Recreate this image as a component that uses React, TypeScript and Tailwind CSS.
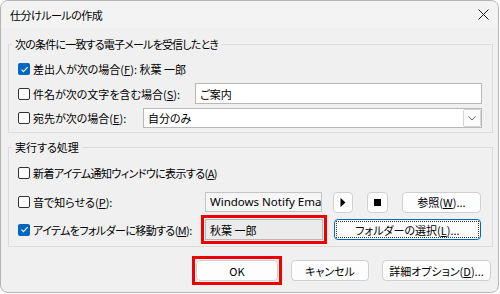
import React from "react";

const F = "font-['Noto_Sans_CJK_JP','Noto_Sans',sans-serif] [font-feature-settings:'palt']";

function Check({ checked }: { checked?: boolean }) {
  return checked ? (
    <span className="w-[12px] h-[12px] rounded-[2px] bg-[#0067c0] flex items-center justify-center shrink-0">
      <svg width="9" height="9" viewBox="0 0 9 9">
        <path d="M1.5 4.6 L3.5 6.6 L7.6 2.2" stroke="white" strokeWidth="1.1" fill="none" />
      </svg>
    </span>
  ) : (
    <span className="w-[12px] h-[12px] rounded-[2px] border border-[#333333] bg-white shrink-0" />
  );
}

function Btn({ children, className = "" }: { children: React.ReactNode; className?: string }) {
  return (
    <div
      className={`h-[21px] rounded-[4px] border border-[#d0d0d0] bg-[#fdfdfd] flex items-center justify-center text-black whitespace-nowrap ${className}`}
    >
      {children}
    </div>
  );
}

export default function App() {
  return (
    <div className={`w-[500px] h-[294px] bg-white text-black text-[11px] leading-[16px] ${F}`}>
      <div className="w-[499px] h-[293px] rounded-[8px] border border-[#b4b4b4] bg-[#f0f0f0] overflow-hidden flex flex-col">
        {/* title bar */}
        <div className="h-[27px] bg-[#f3f3f3] flex items-center justify-between pl-[9px] pr-[8px] shrink-0">
          <span className="tracking-[-0.5px]">仕分けルールの作成</span>
          <svg width="11" height="11" viewBox="0 0 11 11" className="mr-[1px]">
            <path d="M0.5 0.5 L10.5 10.5 M10.5 0.5 L0.5 10.5" stroke="#1a1a1a" strokeWidth="1" />
          </svg>
        </div>

        {/* group 1 */}
        <fieldset className="mt-[8px] ml-[7px] w-[485px] border border-[#dcdcdc] pl-[9px] pr-[9px] pb-[4px]">
          <legend className="-ml-[6px] px-[3px] leading-[16px] tracking-[-0.8px]">次の条件に一致する電子メールを受信したとき</legend>
          <div className="pt-[7px] h-[27px] flex items-center gap-[3px] whitespace-nowrap">
            <Check checked />
            <span>
              差出人が次の場合(<u>F</u>): 秋葉 一郎
            </span>
          </div>
          <div className="mt-[4px] h-[21px] flex items-center">
            <div className="w-[177px] shrink-0 flex items-center gap-[3px] whitespace-nowrap">
              <Check />
              <span>
                件名が次の文字を含む場合(<u>S</u>):
              </span>
            </div>
            <div className="w-[287px] h-[21px] border border-[#b8b8b8] bg-white flex items-center pl-[4px]">
              ご案内
            </div>
          </div>
          <div className="mt-[4px] h-[20px] flex items-center">
            <div className="w-[125px] shrink-0 flex items-center gap-[3px] whitespace-nowrap">
              <Check />
              <span>
                宛先が次の場合(<u>E</u>):
              </span>
            </div>
            <div className="w-[339px] h-[20px] border border-[#b8b8b8] bg-white flex items-center justify-between pl-[4px]">
              <span>自分のみ</span>
              <div className="w-[18px] h-[18px] border border-[#d4d4d4] rounded-[2px] bg-[#fbfbfb] flex items-center justify-center">
                <svg width="8" height="5" viewBox="0 0 8 5">
                  <path d="M0.5 0.5 L4 4 L7.5 0.5" stroke="#606060" strokeWidth="1" fill="none" />
                </svg>
              </div>
            </div>
          </div>
        </fieldset>

        {/* group 2 */}
        <fieldset className="mt-[6px] ml-[7px] w-[485px] border border-[#dcdcdc] pl-[9px] pr-[9px] pb-[2px]">
          <legend className="-ml-[6px] px-[3px] leading-[16px]">実行する処理</legend>
          <div className="pt-[8px] h-[28px] flex items-center gap-[3px] whitespace-nowrap">
            <Check />
            <span className="tracking-[-0.6px]">
              新着アイテム通知ウィンドウに表示する(<u>A</u>)
            </span>
          </div>
          <div className="mt-[9px] h-[20px] flex items-center">
            <div className="w-[187px] shrink-0 flex items-center gap-[3px] whitespace-nowrap">
              <Check />
              <span>
                音で知らせる(<u>P</u>):
              </span>
            </div>
            <div className="w-[117px] h-[20px] border border-[#c4c4c4] bg-[#f6f6f6] flex items-center pl-[4px] overflow-hidden whitespace-nowrap font-['Noto_Sans',sans-serif] text-[11.5px]">
              Windows Notify Email
            </div>
            <Btn className="ml-[11px] w-[20px] h-[20px]">
              <svg width="6" height="9" viewBox="0 0 6 9">
                <path d="M0.5 0 L5.5 4.5 L0.5 9 Z" fill="#000" />
              </svg>
            </Btn>
            <Btn className="ml-[14px] w-[21px] h-[20px]">
              <span className="w-[7px] h-[7px] bg-black" />
            </Btn>
            <Btn className="ml-[14px] w-[79px] h-[20px]">
              参照(<u>W</u>)...
            </Btn>
          </div>
          <div className="mt-[3px] h-[29px] flex items-center">
            <div className="w-[183px] shrink-0 flex items-center gap-[3px] whitespace-nowrap">
              <Check checked />
              <span className="tracking-[-0.6px]">
                アイテムをフォルダーに移動する(<u>M</u>):
              </span>
            </div>
            <div className="w-[126px] h-[29px] border-[3px] border-[#ee0000] p-[1px]">
              <div className="h-[21px] border border-[#b8b8b8] bg-[#ebebeb] flex items-center pl-[4px]">
                秋葉 一郎
              </div>
            </div>
            <div className="ml-[7px] w-[147px] h-[21px] rounded-[4px] border border-[#0067c0] bg-[#fdfdfd] p-[1px]">
              <div className="w-full h-full border border-dotted border-[#333] flex items-center justify-center whitespace-nowrap">
                フォルダーの選択(<u>L</u>)...
              </div>
            </div>
          </div>
        </fieldset>

        {/* bottom buttons */}
        <div className="mt-[9px] h-[29px] flex items-center justify-end pr-[7px]">
          <div className="w-[90px] h-[29px] border-[3px] border-[#ee0000] p-[1px]">
            <Btn className="w-full">OK</Btn>
          </div>
          <Btn className="ml-[9px] w-[78px]">キャンセル</Btn>
          <Btn className="ml-[13px] w-[109px]">
            詳細オプション(<u>D</u>)...
          </Btn>
        </div>
      </div>
    </div>
  );
}
